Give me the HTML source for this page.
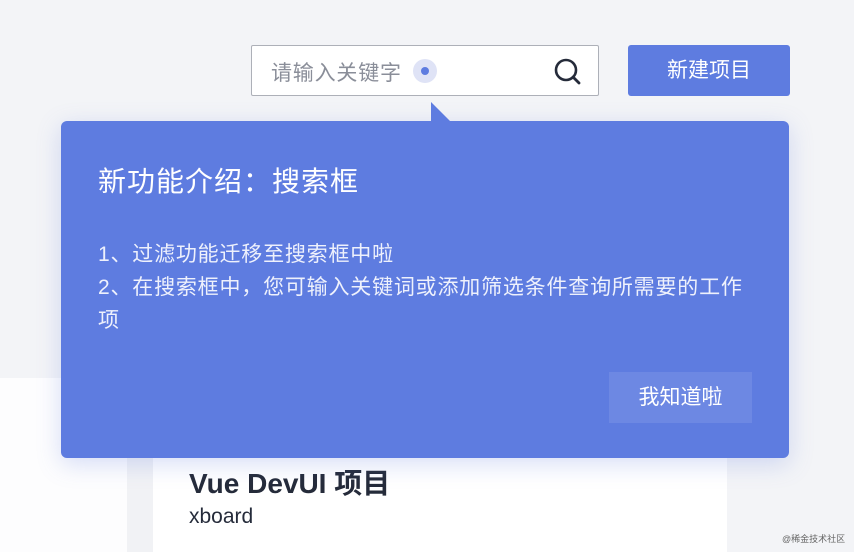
<!DOCTYPE html>
<html><head><meta charset="utf-8"><style>
body{margin:0;width:854px;height:552px;overflow:hidden;position:relative;background:#f3f4f7;font-family:"Liberation Sans","Noto Sans CJK SC",sans-serif;}
.abs{position:absolute;white-space:nowrap}
</style></head><body>
<div class="abs" style="left:0;top:378px;width:127px;height:174px;background:#fdfdfe"></div>
<div class="abs" style="left:127px;top:378px;width:26px;height:174px;background:#f1f2f5"></div>
<div class="abs" style="left:153px;top:378px;width:574px;height:174px;background:#fff"></div>
<div class="abs" style="left:189px;top:462px;font-size:28px;font-weight:bold;color:#252b3a">Vue DevUI 项目</div>
<div class="abs" style="left:189px;top:505px;font-size:21px;color:#252b3a">xboard</div>
<div class="abs" style="left:782px;top:532px;font-size:9px;color:#666">@稀金技术社区</div>

<div class="abs" style="left:251px;top:45px;width:346px;height:49px;background:#fff;border:1px solid #adb0b8;border-radius:2px"></div>
<div class="abs" style="left:271px;top:57px;font-size:21px;letter-spacing:0.8px;color:#8a8e99">请输入关键字</div>
<div class="abs" style="left:413px;top:59px;width:24px;height:24px;border-radius:50%;background:#dfe3f6"></div>
<div class="abs" style="left:421px;top:67px;width:8px;height:8px;border-radius:50%;background:#5e7ce0"></div>
<svg class="abs" style="left:552px;top:56px" width="30" height="30" viewBox="0 0 30 30"><circle cx="14" cy="14" r="10" fill="none" stroke="#252b3a" stroke-width="2.6"/><line x1="21" y1="21" x2="27" y2="27" stroke="#252b3a" stroke-width="2.8" stroke-linecap="round"/></svg>
<div class="abs" style="left:628px;top:45px;width:162px;height:51px;background:#5e7ce0;border-radius:3px;color:#fff;font-size:21px;line-height:51px;text-align:center">新建项目</div>

<div class="abs" style="left:61px;top:121px;width:728px;height:337px;background:#5e7ce0;border-radius:6px;box-shadow:0 6px 24px rgba(94,124,224,0.25)"></div>
<svg class="abs" style="left:430px;top:102px" width="22" height="20"><polygon points="1,0 1,20 21,20" fill="#5e7ce0"/></svg>
<div class="abs" style="left:98px;top:160px;font-size:28px;letter-spacing:1px;color:#fff">新功能介绍：搜索框</div>
<div class="abs" style="left:98px;top:238px;font-size:21px;line-height:33px;letter-spacing:0.8px;color:#eef1fc">1、过滤功能迁移至搜索框中啦<br>2、在搜索框中，您可输入关键词或添加筛选条件查询所需要的工作<br>项</div>
<div class="abs" style="left:609px;top:372px;width:143px;height:51px;background:#6d88e3;color:#fff;font-size:21px;line-height:51px;text-align:center">我知道啦</div>
</body></html>
